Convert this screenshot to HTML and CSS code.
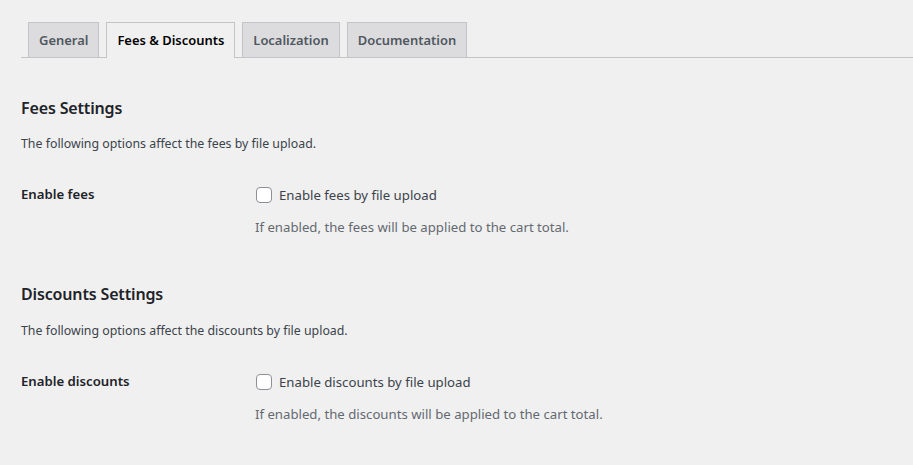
FILE: index.html
```html
<!DOCTYPE html>
<html lang="en">
<head>
<meta charset="utf-8">
<title>Settings</title>
<link rel="stylesheet" href="styles.css">
</head>
<body>
<div class="wrap">
  <nav class="tabs">
    <a class="tab">General</a>
    <a class="tab active">Fees &amp; Discounts</a>
    <a class="tab">Localization</a>
    <a class="tab">Documentation</a>
  </nav>

  <h2 class="heading first">Fees Settings</h2>
  <p class="intro">The following options affect the fees by file upload.</p>
  <div class="row">
    <div class="label">Enable fees</div>
    <div class="field">
      <label class="check"><input type="checkbox" class="box"> Enable fees by file upload</label>
      <p class="desc">If enabled, the fees will be applied to the cart total.</p>
    </div>
  </div>

  <h2 class="heading">Discounts Settings</h2>
  <p class="intro">The following options affect the discounts by file upload.</p>
  <div class="row">
    <div class="label">Enable discounts</div>
    <div class="field">
      <label class="check"><input type="checkbox" class="box"> Enable discounts by file upload</label>
      <p class="desc">If enabled, the discounts will be applied to the cart total.</p>
    </div>
  </div>
</div>
</body>
</html>
```

FILE: styles.css
```css
html, body {
  margin: 0;
  padding: 0;
  background: #f0f0f1;
}
body {
  font-family: "Noto Sans", "Open Sans", sans-serif;
  color: #3c434a;
  font-size: 12.4px;
}
.wrap {
  padding: 22px 0 0 21px;
}
.tabs {
  display: flex;
  align-items: flex-end;
  border-bottom: 1px solid #c3c4c7;
  height: 35px;
}
.tab {
  box-sizing: border-box;
  height: 35px;
  margin-left: 7px;
  padding: 5px 10px;
  border: 1px solid #c3c4c7;
  border-bottom: none;
  background: #dcdcde;
  color: #50575e;
  font-size: 12.95px;
  font-weight: 600;
  line-height: 24px;
  white-space: nowrap;
  cursor: pointer;
}
.tab.active {
  background: #f0f0f1;
  color: #000;
  height: 36px;
  margin-bottom: -1px;
}
.heading {
  margin: 14px 0 0;
  font-size: 16px;
  letter-spacing: -0.15px;
  font-weight: 600;
  line-height: 24px;
  color: #1d2327;
}
.heading.first {
  margin-top: 38px;
}
.intro {
  margin: 14px 0 0;
  font-size: 12.35px;
  line-height: 20px;
  color: #3c434a;
}
.row + .heading + .intro {
  margin-top: 15px;
}
.row {
  display: flex;
  margin-top: 30px;
}
.row + .heading {
  margin-top: 45px;
}
.label {
  width: 234px;
  flex: none;
  font-size: 13.2px;
  font-weight: 600;
  line-height: 20px;
  color: #1d2327;
}
.field {
  display: flex;
  flex-direction: column;
}
.check {
  display: flex;
  align-items: center;
  gap: 7px;
  font-size: 13.2px;
  line-height: 20px;
  color: #3c434a;
  height: 20px;
  margin-top: 1px;
}
.box {
  appearance: none;
  -webkit-appearance: none;
  box-sizing: border-box;
  width: 16px;
  height: 16px;
  margin: 0 0 0 1px;
  border: 1px solid #8c8f94;
  border-radius: 4px;
  background: #fff;
}
.desc {
  margin: 12px 0 0;
  font-size: 13.2px;
  line-height: 20px;
  color: #646970;
}
```
